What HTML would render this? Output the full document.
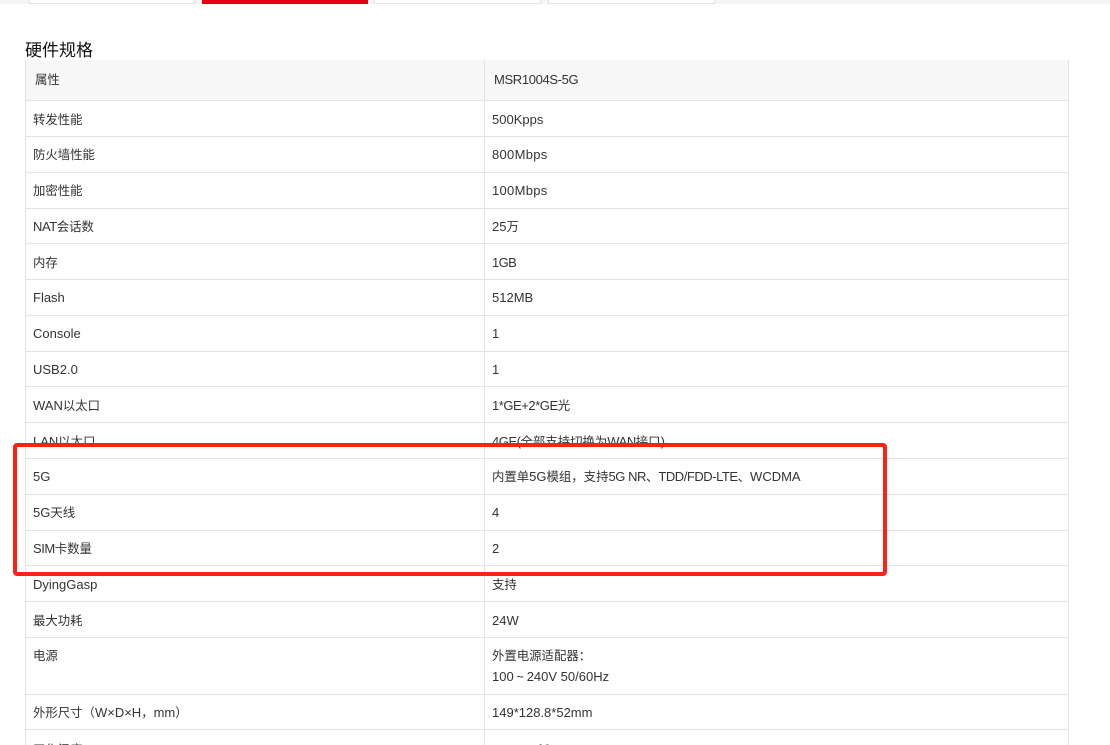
<!DOCTYPE html>
<html lang="zh">
<head>
<meta charset="utf-8">
<title>硬件规格</title>
<style>
html,body{margin:0;padding:0;background:#fff;width:1110px;height:745px;overflow:hidden}
#p{width:1110px;height:745px;position:relative;overflow:hidden;font-family:"Liberation Sans","Noto Sans CJK SC",sans-serif;color:#333;font-size:13px}
i{font-style:normal;font-size:12.4px}
b{font-weight:normal;letter-spacing:-.45px}
.a{position:absolute}
.h{position:absolute;left:25px;width:1044px;height:1px;background:#e3e3e3}
.v{position:absolute;top:60px;height:685px;width:1px;background:#e3e3e3}
.t{position:absolute;line-height:20px;white-space:nowrap}
.l{left:33px}
.r{left:492px}
.w{display:inline-block;width:13px;text-align:center}
</style>
</head>
<body>
<div id="p">
<div class="a" style="left:0;top:0;width:1110px;height:4px;background:#f5f5f5"></div>
<div class="a" style="left:29px;top:0;width:164px;height:3px;background:#fff;border:solid #e3e3e3;border-width:0 1px 1px 1px"></div>
<div class="a" style="left:202px;top:0;width:166px;height:4px;background:#e60012"></div>
<div class="a" style="left:374px;top:0;width:165px;height:3px;background:#fff;border:solid #e3e3e3;border-width:0 1px 1px 1px"></div>
<div class="a" style="left:548px;top:0;width:165px;height:3px;background:#fff;border:solid #e3e3e3;border-width:0 1px 1px 1px"></div>

<div class="t" style="left:25px;top:41px;font-size:17px;line-height:20px;color:#111">硬件规格</div>

<div class="a" style="left:25px;top:60px;width:1044px;height:40px;background:#f7f7f7"></div>
<div class="v" style="left:25px"></div>
<div class="v" style="left:484px"></div>
<div class="v" style="left:1068px"></div>

<div class="h" style="top:100px"></div>
<div class="h" style="top:136px"></div>
<div class="h" style="top:172px"></div>
<div class="h" style="top:208px"></div>
<div class="h" style="top:243px"></div>
<div class="h" style="top:279px"></div>
<div class="h" style="top:315px"></div>
<div class="h" style="top:351px"></div>
<div class="h" style="top:386px"></div>
<div class="h" style="top:422px"></div>
<div class="h" style="top:458px"></div>
<div class="h" style="top:494px"></div>
<div class="h" style="top:530px"></div>
<div class="h" style="top:565px"></div>
<div class="h" style="top:601px"></div>
<div class="h" style="top:637px"></div>
<div class="h" style="top:694px"></div>
<div class="h" style="top:729px"></div>

<div class="t" style="left:35px;top:70px"><i>属性</i></div><div class="t" style="left:494px;top:70px;letter-spacing:-.35px">MSR1004S-5G</div>
<div class="t l" style="top:110px"><i>转发性能</i></div><div class="t r" style="top:110px">500Kpps</div>
<div class="t l" style="top:145px"><i>防火墙性能</i></div><div class="t r" style="top:145px;letter-spacing:.3px">800Mbps</div>
<div class="t l" style="top:181px"><i>加密性能</i></div><div class="t r" style="top:181px;letter-spacing:.3px">100Mbps</div>
<div class="t l" style="top:217px"><b>NAT</b><i>会话数</i></div><div class="t r" style="top:217px">25<i>万</i></div>
<div class="t l" style="top:253px"><i>内存</i></div><div class="t r" style="top:253px;letter-spacing:-.6px">1GB</div>
<div class="t l" style="top:288px">Flash</div><div class="t r" style="top:288px">512MB</div>
<div class="t l" style="top:324px">Console</div><div class="t r" style="top:324px">1</div>
<div class="t l" style="top:360px">USB2.0</div><div class="t r" style="top:360px">1</div>
<div class="t l" style="top:396px">WAN<i>以太口</i></div><div class="t r" style="top:396px"><b>1*GE+2*GE</b><i>光</i></div>
<div class="t l" style="top:432px">LAN<i>以太口</i></div><div class="t r" style="top:432px"><b>4GE(</b><i>全部支持切换为</i><b>WAN</b><i>接口</i>)</div>
<div class="t l" style="top:467px">5G</div><div class="t r" style="top:467px"><i>内置单</i>5G<i>模组，支持</i><b>5G NR</b><i>、</i><b>TDD/FDD-LTE</b><i>、</i>WCDMA</div>
<div class="t l" style="top:503px">5G<i>天线</i></div><div class="t r" style="top:503px">4</div>
<div class="t l" style="top:539px"><b>SIM</b><i>卡数量</i></div><div class="t r" style="top:539px">2</div>
<div class="t l" style="top:575px">DyingGasp</div><div class="t r" style="top:575px"><i>支持</i></div>
<div class="t l" style="top:611px"><i>最大功耗</i></div><div class="t r" style="top:611px">24W</div>
<div class="t l" style="top:646px"><i>电源</i></div><div class="t r" style="top:646px"><i>外置电源适配器：</i></div>
<div class="t r" style="top:667px">100<span class="w">~</span>240V 50/60Hz</div>
<div class="t l" style="top:703px"><i>外形尺寸（</i>W×D×H<i>，</i>mm<i>）</i></div><div class="t r" style="top:703px">149*128.8*52mm</div>
<div class="t l" style="top:740px"><i>工作温度</i></div><div class="t r" style="top:740px">-30<span class="w">~</span>60<i>℃</i></div>

<div class="a" style="left:13px;top:443px;width:866px;height:125px;border:4px solid #ff2116;border-radius:4px"></div>
</div>
</body>
</html>
